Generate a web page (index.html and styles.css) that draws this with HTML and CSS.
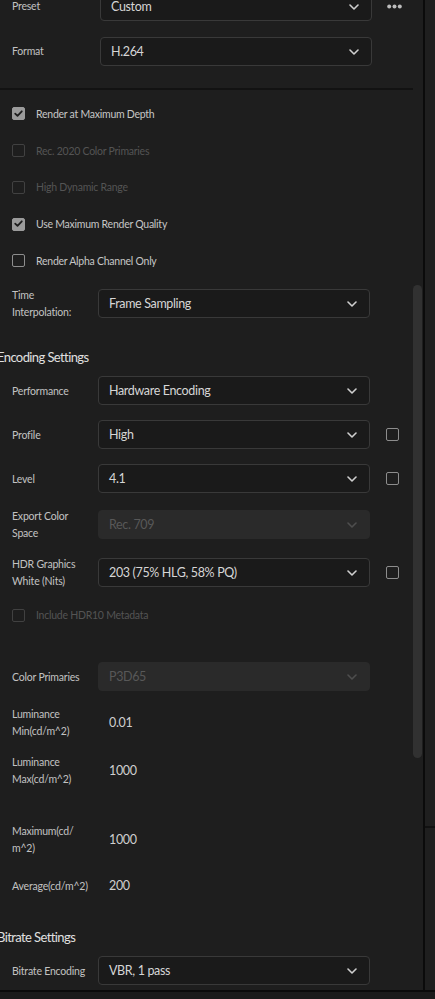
FILE: index.html
```html
<!DOCTYPE html>
<html lang="en">
<head>
<meta charset="utf-8">
<title>Export Settings</title>
<link rel="stylesheet" href="styles.css">
</head>
<body>
<div class="app">
  <div class="main">
    <div class="panel">
      <section class="top">
        <div class="trow">
          <span class="label">Preset</span>
          <div class="select"><span>Custom</span><svg class="chev" width="10" height="6" viewBox="0 0 10 6"><path d="M1 1l4 4 4-4"/></svg></div>
          <svg class="more" width="15" height="5" viewBox="0 0 15 5"><circle cx="2.2" cy="2.5" r="2"/><circle cx="7.5" cy="2.5" r="2"/><circle cx="12.8" cy="2.5" r="2"/></svg>
        </div>
        <div class="trow">
          <span class="label">Format</span>
          <div class="select"><span>H.264</span><svg class="chev" width="10" height="6" viewBox="0 0 10 6"><path d="M1 1l4 4 4-4"/></svg></div>
        </div>
      </section>
      <div class="divider"></div>
      <div class="scroll">
        <div class="content">
          <div class="checks">
            <div class="crow"><span class="cb on"><svg width="13" height="13" viewBox="0 0 13 13"><path d="M3.2 6.6l2.3 2.3 4.3-4.6"/></svg></span><span class="clabel">Render at Maximum Depth</span></div>
            <div class="crow off"><span class="cb"></span><span class="clabel">Rec. 2020 Color Primaries</span></div>
            <div class="crow off"><span class="cb"></span><span class="clabel">High Dynamic Range</span></div>
            <div class="crow"><span class="cb on"><svg width="13" height="13" viewBox="0 0 13 13"><path d="M3.2 6.6l2.3 2.3 4.3-4.6"/></svg></span><span class="clabel">Use Maximum Render Quality</span></div>
            <div class="crow"><span class="cb"></span><span class="clabel">Render Alpha Channel Only</span></div>
          </div>

          <div class="row tall r-interp">
            <span class="label">Time<br>Interpolation:</span>
            <div class="select"><span>Frame Sampling</span><svg class="chev" width="10" height="6" viewBox="0 0 10 6"><path d="M1 1l4 4 4-4"/></svg></div>
          </div>

          <h2 class="section s-enc">Encoding Settings</h2>

          <div class="rows">
            <div class="row">
              <span class="label">Performance</span>
              <div class="select"><span>Hardware Encoding</span><svg class="chev" width="10" height="6" viewBox="0 0 10 6"><path d="M1 1l4 4 4-4"/></svg></div>
            </div>
            <div class="row">
              <span class="label">Profile</span>
              <div class="select"><span>High</span><svg class="chev" width="10" height="6" viewBox="0 0 10 6"><path d="M1 1l4 4 4-4"/></svg></div>
              <span class="cb"></span>
            </div>
            <div class="row">
              <span class="label">Level</span>
              <div class="select"><span>4.1</span><svg class="chev" width="10" height="6" viewBox="0 0 10 6"><path d="M1 1l4 4 4-4"/></svg></div>
              <span class="cb"></span>
            </div>
            <div class="row tall">
              <span class="label">Export Color<br>Space</span>
              <div class="select disabled"><span>Rec. 709</span><svg class="chev" width="10" height="6" viewBox="0 0 10 6"><path d="M1 1l4 4 4-4"/></svg></div>
            </div>
            <div class="row tall">
              <span class="label">HDR Graphics<br>White (Nits)</span>
              <div class="select"><span>203 (75% HLG, 58% PQ)</span><svg class="chev" width="10" height="6" viewBox="0 0 10 6"><path d="M1 1l4 4 4-4"/></svg></div>
              <span class="cb"></span>
            </div>
            <div class="crow off single"><span class="cb"></span><span class="clabel">Include HDR10 Metadata</span></div>

            <div class="row gap-big">
              <span class="label">Color Primaries</span>
              <div class="select disabled"><span>P3D65</span><svg class="chev" width="10" height="6" viewBox="0 0 10 6"><path d="M1 1l4 4 4-4"/></svg></div>
            </div>
            <div class="row tall">
              <span class="label">Luminance<br>Min(cd/m^2)</span>
              <span class="value">0.01</span>
            </div>
            <div class="row tall">
              <span class="label">Luminance<br>Max(cd/m^2)</span>
              <span class="value">1000</span>
            </div>
            <div class="row tall gap-big">
              <span class="label">Maximum(cd/<br>m^2)</span>
              <span class="value">1000</span>
            </div>
            <div class="row">
              <span class="label">Average(cd/m^2)</span>
              <span class="value">200</span>
            </div>
          </div>

          <h2 class="section s-bit">Bitrate Settings</h2>

          <div class="row">
            <span class="label">Bitrate Encoding</span>
            <div class="select"><span>VBR, 1 pass</span><svg class="chev" width="10" height="6" viewBox="0 0 10 6"><path d="M1 1l4 4 4-4"/></svg></div>
          </div>
        </div>
        <div class="track"><div class="thumb"></div></div>
      </div>
    </div>
    <div class="vline"></div>
    <div class="side"><div class="side-top"></div></div>
  </div>
  <div class="hline"></div>
  <div class="footer"></div>
</div>
</body>
</html>
```

FILE: styles.css
```css
* { box-sizing: border-box; }
html, body { margin: 0; padding: 0; }
body {
  background: #1e1e1e;
  font-family: Lato, "Open Sans", "Liberation Sans", sans-serif;
  color: #c4c4c4;
  width: 435px;
  height: 999px;
  overflow: hidden;
}
.app { display: flex; flex-direction: column; height: 999px; }
.main { display: flex; height: 990px; overflow: hidden; }
.panel { width: 423px; display: flex; flex-direction: column; overflow: hidden; }
.vline { width: 2px; background: #0b0b0b; }
.side { flex: 1; background: #1f1f1f; }
.side-top { height: 828px; border-bottom: 2px solid #111; }
.hline { height: 2px; background: #0b0b0b; }
.footer { flex: 1; background: #1b1b1b; }

/* top section */
.top { margin-top: -8px; padding: 0 0 22px 12px; display: flex; flex-direction: column; gap: 16px; }
.trow { display: grid; grid-template-columns: 88px 272px auto; align-items: center; height: 29px; }
.more { fill: #bdbdbd; margin-left: 15px; }
.divider { height: 2px; background: #121212; margin-right: 10px; flex: none; }

.label { font-size: 10.5px; letter-spacing: -0.2px; line-height: 16.5px; color: #c2c2c2; white-space: nowrap; }

.select {
  height: 29px;
  border: 1px solid #393939;
  border-radius: 4px;
  background: #1a1a1a;
  display: flex;
  align-items: center;
  justify-content: space-between;
  padding: 0 12px 0 10px;
  font-size: 12.5px;
  letter-spacing: -0.35px;
  color: #d6d6d6;
}
.select .chev { fill: none; stroke: #cfcfcf; stroke-width: 1.6; stroke-linecap: round; stroke-linejoin: round; }
.select.disabled { background: #2a2a2a; border-color: #2a2a2a; color: #585858; }
.select.disabled .chev { stroke: #4e4e4e; }

/* scroll area */
.scroll { flex: 1; display: flex; min-height: 0; }
.content { width: 413px; padding-left: 12px; }
.track { width: 10px; }
.thumb { width: 9px; height: 473px; margin-top: 195px; border-radius: 5px; background: #313131; }

.checks { padding-top: 5.5px; }
.crow { display: flex; align-items: center; height: 36.75px; }
.clabel { font-size: 10.5px; letter-spacing: -0.25px; color: #c6c6c6; margin-left: 11px; white-space: nowrap; }
.crow.off .clabel { color: #545454; }
.cb {
  width: 13px; height: 13px;
  border: 1.5px solid #8d8d8d;
  border-radius: 2px;
  flex: none;
  display: block;
}
.crow.off .cb { border-color: #414141; }
.cb.on { background: #9b9b9b; border-color: #9b9b9b; }
.cb.on svg { display: block; margin: -1.5px; fill: none; stroke: #1e1e1e; stroke-width: 1.8; stroke-linecap: round; stroke-linejoin: round; }

.row { display: grid; grid-template-columns: 86px 272px 16px 13px; align-items: center; min-height: 29px; }
.row > .label { grid-column: 1; }
.row > .select, .row > .value { grid-column: 2; }
.row > .cb { grid-column: 4; }
.row.tall { min-height: 33px; }
.value { font-size: 12.5px; letter-spacing: -0.35px; color: #cfcfcf; padding-left: 11px; }

.r-interp { margin-top: 8px; }
.rows { display: flex; flex-direction: column; gap: 15px; }
.crow.single { height: 22px; }
.gap-big { margin-top: 21px; }

.section {
  margin: 0 0 0 -15px;
  font-size: 13px;
  letter-spacing: -0.6px;
  font-weight: normal;
  line-height: 20px;
  color: #e0e0e0;
  white-space: nowrap;
}
.s-enc { margin-top: 27px; margin-bottom: 9px; }
.s-bit { margin-top: 27px; margin-bottom: 9px; }
```
